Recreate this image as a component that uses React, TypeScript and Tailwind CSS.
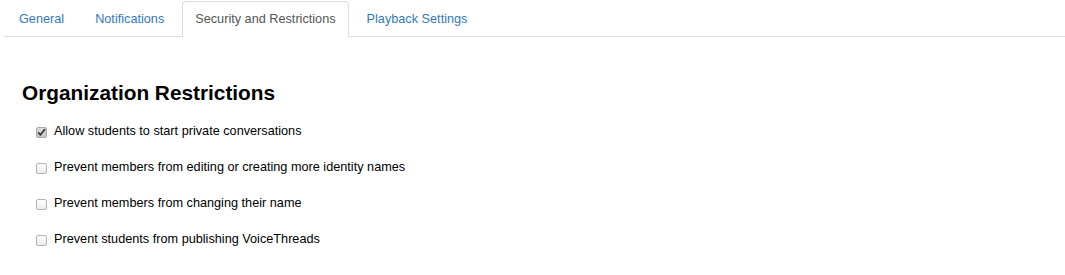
import React from "react";

// tabs across the top, the active one is drawn with a border
const tabs = [
  { name: "General", active: false },
  { name: "Notifications", active: false },
  { name: "Security and Restrictions", active: true },
  { name: "Playback Settings", active: false },
];

const restrictions = [
  { label: "Allow students to start private conversations", checked: true },
  { label: "Prevent members from editing or creating more identity names", checked: false },
  { label: "Prevent members from changing their name", checked: false },
  { label: "Prevent students from publishing VoiceThreads", checked: false },
];

function Checkbox({ checked }: { checked: boolean }) {
  return (
    <span
      className={`flex items-center justify-center w-[11px] h-[11px] rounded-[2px] border ${
        checked
          ? "border-[#a9a9a9] bg-gradient-to-b from-[#dcdcdc] to-[#c4c4c4]"
          : "border-[#b4b4b4] bg-gradient-to-b from-[#ffffff] to-[#ececec]"
      }`}
    >
      {checked && (
        <svg width="9" height="9" viewBox="0 0 9 9" className="block">
          <path d="M1.6 4.8 L3.5 6.8 L7.6 1.6" fill="none" stroke="#3c3c3c" strokeWidth="1.7" strokeLinecap="round" strokeLinejoin="round" />
        </svg>
      )}
    </span>
  );
}

export default function App() {
  return (
    <div className="w-[1065px] h-[275px] bg-white overflow-hidden font-['Liberation_Sans',Arial,sans-serif] text-[12.7px] text-[#222]">
      {/* Tabs */}
      <ul className="ml-1 pt-[1px] pl-[2px] flex border-b border-[#ddd]">
        {tabs.map((tab) => (
          <li key={tab.name} className="mr-[5px] -mb-px">
            <span
              className={`block px-3 py-2 leading-[18px] border rounded-t-[4px] ${
                tab.active
                  ? "bg-white text-[#555] border-[#ddd] border-b-white"
                  : "text-[#337ab7] border-transparent"
              }`}
            >
              {tab.name}
            </span>
          </li>
        ))}
      </ul>

      {/* Organization restrictions */}
      <div className="pl-[22px] pt-[44px]">
        <h2 className="text-[20.8px] leading-[24px] font-bold text-black">Organization Restrictions</h2>
        <ul className="mt-[9px] pl-[14px]">
          {restrictions.map((r) => (
            <li key={r.label} className="h-9 flex items-center gap-[7px] text-black">
              <Checkbox checked={r.checked} />
              <span>{r.label}</span>
            </li>
          ))}
        </ul>
      </div>
    </div>
  );
}
